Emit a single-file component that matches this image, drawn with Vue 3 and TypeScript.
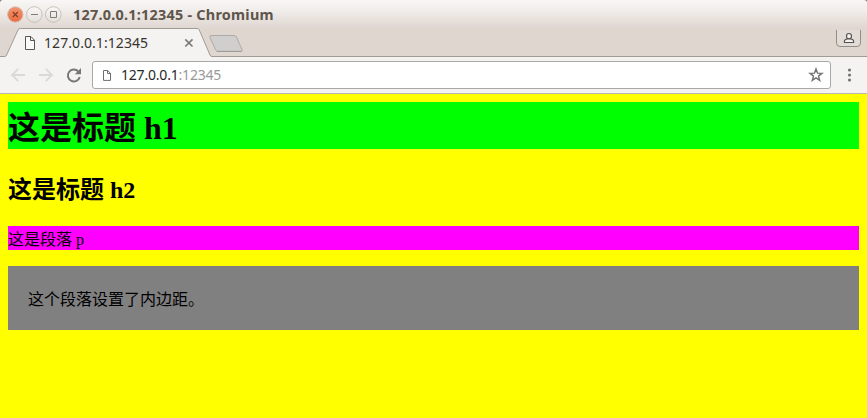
<script setup lang="ts">
const host: string = '127.0.0.1'
const port: string = ':12345'
const address: string = host + port
</script>

<template>
  <div class="window">
    <header class="titlebar">
      <svg class="controls" width="58" height="18" viewBox="0 0 58 18">
        <defs>
          <linearGradient id="closeFill" x1="0" y1="0" x2="0" y2="1">
            <stop offset="0" stop-color="#f5936c" />
            <stop offset="1" stop-color="#ec6a3e" />
          </linearGradient>
          <linearGradient id="plainFill" x1="0" y1="0" x2="0" y2="1">
            <stop offset="0" stop-color="#faf9f7" />
            <stop offset="1" stop-color="#e2dfda" />
          </linearGradient>
        </defs>
        <circle cx="9.3" cy="8.5" r="7.6" fill="url(#closeFill)" stroke="#cfb3a6" />
        <path d="M6.8 6l5 5m0-5l-5 5" stroke="#7b3f28" stroke-width="1.2" fill="none" />
        <circle cx="28.3" cy="8.5" r="7.8" fill="url(#plainFill)" stroke="#c7c0b9" />
        <path d="M25 8.5h7" stroke="#827c74" />
        <circle cx="47.3" cy="8.5" r="7.8" fill="url(#plainFill)" stroke="#c7c0b9" />
        <path d="M44.5 5.5h6v6h-6z" stroke="#827c74" fill="none" />
      </svg>
      <span class="window-title">{{ address }} - Chromium</span>
    </header>

    <nav class="tabstrip">
      <div class="tab">
        <svg class="tab-shape" width="212" height="29" viewBox="0 0 212 29">
          <path d="M0 28.5H4.5Q6 28.5 6.6 27L18 2Q18.8 .5 20.3 .5H197Q198.6 .5 199.3 2L210 27Q210.7 28.5 212 28.5V29H0z" fill="#f4f3f2" />
          <path d="M0 28.5H4.5Q6 28.5 6.6 27L18 2Q18.8 .5 20.3 .5H197Q198.6 .5 199.3 2L210 27Q210.7 28.5 212 28.5" fill="none" stroke="#a19b95" />
        </svg>
        <svg class="tab-file" width="12" height="16" viewBox="0 0 12 16">
          <path d="M1.5 1.5h5.4l3.6 3.7v9.3H1.5zM6.5 1.5v4h4" fill="#fafafa" stroke="#555" />
        </svg>
        <span class="tab-title">{{ address }}</span>
        <svg class="tab-close" width="10" height="10" viewBox="0 0 10 10">
          <path d="M1.3 1.3l7.2 7.2m0-7.2L1.3 8.5" stroke="#7d7b79" stroke-width="1.7" />
        </svg>
      </div>
      <svg class="new-tab" width="37" height="20" viewBox="0 0 37 20">
        <path d="M3.2 2.5H26Q27.7 2.5 28.5 4L34 16.5Q34.7 18.3 33 18.3H10Q8.3 18.3 7.5 16.6L2 4.5Q1.2 2.5 3.2 2.5z" fill="#d0cfcd" stroke="#b1aaa4" />
        <path d="M8.8 18.5H33.5" stroke="#a19b96" />
      </svg>
      <svg class="profile" width="27" height="19" viewBox="0 0 27 19">
        <path d="M1.5 0V13Q1.5 16.5 5 16.5H22Q25.5 16.5 25.5 13V0" fill="#e2dbd6" stroke="#938d88" />
        <ellipse cx="14" cy="6.2" rx="2.5" ry="2.7" fill="#f4f1ef" stroke="#555250" stroke-width="1.1" />
        <path d="M9.4 12.5V11.3Q9.4 9.5 12 9H16Q18.6 9.5 18.6 11.3V12.5z" fill="#f4f1ef" stroke="#555250" stroke-width="1.1" stroke-linejoin="round" />
      </svg>
    </nav>

    <div class="toolbar">
      <svg class="navigation" width="74" height="20" viewBox="0 0 74 20">
        <path d="M17 10H4.5M10.2 3.8L4 10l6.2 6.2" fill="none" stroke="#dad9d7" stroke-width="1.8" />
        <path d="M31 10h12.5M37.8 3.8L44 10l-6.2 6.2" fill="none" stroke="#dad9d7" stroke-width="1.8" />
        <path d="M70.2 6.3A6 6 0 1 0 71.7 12" fill="none" stroke="#777775" stroke-width="2" />
        <path d="M73 3v6.2h-6.2z" fill="#777775" />
      </svg>
      <div class="omnibox">
        <svg class="page-icon" width="10" height="13" viewBox="0 0 10 13">
          <path d="M1.5 1.5h4.2l2.8 2.9v7H1.5zM5.5 1.5v3h3" fill="none" stroke="#6e6e6e" />
        </svg>
        <span class="address"><span class="host">{{ host }}</span><span class="port">{{ port }}</span></span>
        <svg class="star" width="16" height="16" viewBox="0 0 16 16">
          <path d="M8 2l1.5 4.1 4.5.2-3.5 2.8 1.2 4.3L8 10.9l-3.7 2.5 1.2-4.3L2 6.3l4.5-.2z" fill="none" stroke="#727272" stroke-width="1.4" />
        </svg>
      </div>
      <svg class="more" width="5" height="16" viewBox="0 0 5 16">
        <circle cx="2.5" cy="3" r="1.6" fill="#757575" />
        <circle cx="2.5" cy="8" r="1.6" fill="#757575" />
        <circle cx="2.5" cy="13" r="1.6" fill="#757575" />
      </svg>
    </div>

    <main class="page">
      <h1>这是标题 h1</h1>
      <h2>这是标题 h2</h2>
      <p class="plain">这是段落 p</p>
      <p class="padded">这个段落设置了内边距。</p>
    </main>
  </div>
</template>

<style scoped>
.window {
  display: flex;
  flex-direction: column;
  height: 418px;
  overflow: hidden;
  background: #77767a;
  font-family: "Noto Sans", "Open Sans", sans-serif;
}
svg {
  display: block;
  flex: none;
}
.titlebar {
  box-sizing: border-box;
  flex: none;
  display: flex;
  align-items: center;
  height: 28px;
  padding: 2px 0 0 6px;
  border-radius: 3px 3px 0 0;
  background: linear-gradient(#f8f7f5, #f0ece9 40%, #dfd6d0);
}
.window-title {
  margin-left: 9px;
  color: #5e554b;
  font-size: 14.4px;
  font-weight: 700;
  letter-spacing: 0.25px;
  line-height: 20px;
  white-space: nowrap;
}
.tabstrip {
  box-sizing: border-box;
  flex: none;
  display: flex;
  height: 29px;
  background: linear-gradient(#dfd6d0, #dfd6d0 28px, #a19b95 28px);
}
.tab {
  position: relative;
  box-sizing: border-box;
  display: flex;
  align-items: center;
  width: 212px;
  height: 29px;
  padding-left: 24px;
}
.tab-shape {
  position: absolute;
  left: 0;
  top: 0;
}
.tab-file,
.tab-title,
.tab-close {
  position: relative;
}
.tab-title {
  width: 139px;
  margin-left: 8px;
  color: #37342f;
  font-size: 14px;
  letter-spacing: 0.07px;
  line-height: 20px;
}
.tab-close {
  margin-left: 1px;
}
.new-tab {
  margin: 5px 0 0 -4px;
}
.profile {
  margin: 2px 5px 0 auto;
}
.toolbar {
  box-sizing: border-box;
  flex: none;
  display: flex;
  align-items: center;
  height: 37px;
  padding: 0 15px 0 8px;
  border-bottom: 1px solid #b9b7b4;
  background: #f4f3f2;
}
.omnibox {
  box-sizing: border-box;
  flex: none;
  display: flex;
  align-items: center;
  width: 739px;
  height: 28px;
  margin-left: 10px;
  padding: 0 6px 0 9px;
  border: 1px solid #aaa8a6;
  border-radius: 3px;
  background: #fff;
}
.address {
  margin-left: 9px;
  font-size: 14px;
  letter-spacing: -0.2px;
  line-height: 20px;
}
.host {
  color: #292929;
}
.port {
  color: #999;
}
.star {
  margin-left: auto;
}
.more {
  margin-left: auto;
}
.page {
  flex: 1;
  padding: 8px;
  background: #ff0;
  color: #000;
  font-family: "Liberation Serif", "Noto Sans CJK SC", serif;
}
h1,
h2,
p {
  margin: 0;
}
h1 {
  box-sizing: border-box;
  height: 47px;
  padding-top: 3px;
  background: #0f0;
  font-size: 32px;
  line-height: 47px;
}
h2 {
  margin-top: 24px;
  font-size: 24px;
  line-height: 35px;
}
p {
  font-size: 16px;
  line-height: 24px;
}
.plain {
  box-sizing: border-box;
  height: 24px;
  margin-top: 18px;
  padding-top: 2px;
  line-height: 24px;
  background: #f0f;
}
.padded {
  margin-top: 16px;
  padding: 22px 20px 18px;
  background: #808080;
}
</style>
